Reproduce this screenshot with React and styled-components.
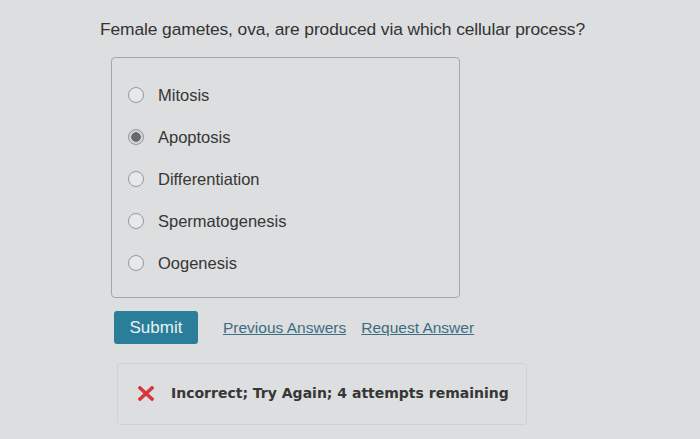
import React from 'react';
import styled, { createGlobalStyle } from 'styled-components';

const GlobalStyle = createGlobalStyle`
  html, body {
    margin: 0;
    padding: 0;
    background: #dcdedf;
  }
  body {
    font-family: "Liberation Sans", Arial, sans-serif;
    color: #3a3a3a;
  }
`;

const options = [
  { label: 'Mitosis', checked: false },
  { label: 'Apoptosis', checked: true },
  { label: 'Differentiation', checked: false },
  { label: 'Spermatogenesis', checked: false },
  { label: 'Oogenesis', checked: false },
];

const App = () => {
  return (
    <>
      <GlobalStyle />
      <Page>
        <Question>Female gametes, ova, are produced via which cellular process?</Question>

        <OptionBox>
          {options.map((o) => (
            <OptionRow key={o.label}>
              <Radio checked={o.checked} />
              <OptionLabel>{o.label}</OptionLabel>
            </OptionRow>
          ))}
        </OptionBox>

        <Actions>
          <SubmitButton>Submit</SubmitButton>
          <LinkText className="prev">Previous Answers</LinkText>
          <LinkText>Request Answer</LinkText>
        </Actions>

        <Feedback>
          <svg width="16" height="15" viewBox="0 0 16 15">
            <path d="M2 2 L14 13 M14 2 L2 13" stroke="#d6373b" strokeWidth="3.6" strokeLinecap="square" />
          </svg>
          <FeedbackText>Incorrect; Try Again; 4 attempts remaining</FeedbackText>
        </Feedback>
      </Page>
    </>
  );
};

const Page = styled.div`
  width: 700px;
  height: 439px;
  padding: 18px 0 0 100px;
  box-sizing: border-box;
  overflow: hidden;
`;

const Question = styled.div`
  font-size: 17.4px;
  line-height: 22px;
  color: #333;
  letter-spacing: -0.1px;
`;

const OptionBox = styled.div`
  margin: 17px 0 0 11px;
  width: 349px;
  height: 241px;
  box-sizing: border-box;
  border: 1px solid #a4a6a7;
  border-radius: 4px;
  padding: 26px 0 0 16px;
  display: flex;
  flex-direction: column;
  gap: 20px;
`;

const OptionRow = styled.div`
  display: flex;
  align-items: center;
  height: 22px;
`;

const Radio = styled.span`
  width: 14px;
  height: 14px;
  border-radius: 50%;
  border: 1.5px solid #95979a;
  background: ${(p) => (p.checked ? 'radial-gradient(circle, #67696b 0 4.5px, #d2d4d5 5px)' : '#e6e8e9')};
  flex-shrink: 0;
`;

const OptionLabel = styled.span`
  margin-left: 14px;
  font-size: 16.5px;
  color: #363636;
`;

const Actions = styled.div`
  margin: 13px 0 0 14px;
  display: flex;
  align-items: center;
`;

const SubmitButton = styled.button`
  width: 84px;
  height: 33px;
  border: none;
  border-radius: 3px;
  background: #2b7e99;
  color: #e8f1f4;
  font-family: "Liberation Sans", Arial, sans-serif;
  font-size: 17px;
  padding: 0;
`;

const LinkText = styled.a`
  font-size: 15.5px;
  color: #3c6d82;
  text-decoration: underline;
  margin-left: 15px;
  &.prev {
    margin-left: 25px;
  }
`;

const Feedback = styled.div`
  margin: 19px 0 0 17px;
  width: 410px;
  height: 62px;
  box-sizing: border-box;
  border: 1px solid #cfd2d3;
  border-radius: 3px;
  display: flex;
  align-items: center;
  padding: 0 0 2px 20px;
`;

const FeedbackText = styled.span`
  margin-left: 17px;
  font-family: "DejaVu Sans", Verdana, sans-serif;
  font-weight: bold;
  font-size: 14px;
  color: #363636;
`;

export default App;
